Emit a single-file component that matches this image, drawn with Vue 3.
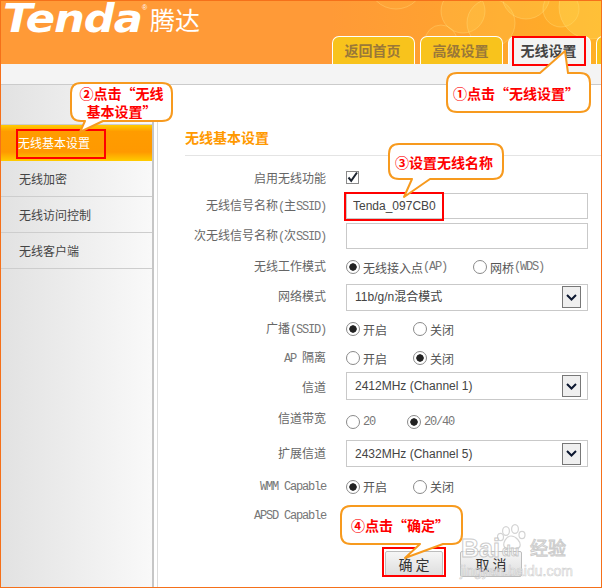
<script setup>
const sideItems = ['无线加密', '无线访问控制', '无线客户端']
const tabs = ['返回首页', '高级设置', '无线设置', '']
const bubbles = [
  { x: 395, y: -20, r: 28, a: 0.1 }, { x: 462, y: 10, r: 22, a: 0.2 }, { x: 490, y: 22, r: 24, a: 0.18 },
  { x: 525, y: -6, r: 24, a: 0.24 }, { x: 560, y: 8, r: 18, a: 0.16 }, { x: 590, y: 6, r: 32, a: 0.34 }, { x: 440, y: 40, r: 16, a: 0.1 }
]
const shapes = [
  'M457 73H540L565 51L568 73H580Q590 73 590 83V102Q590 112 580 112H457Q447 112 447 102V83Q447 73 457 73Z',
  'M81 83H162Q172 83 172 93V111Q172 121 162 121H103L80 132L85 121H81Q71 121 71 111V93Q71 83 81 83Z',
  'M399 144H493Q503 144 503 154V169Q503 179 493 179H430L404 197L412 179H399Q389 179 389 169V154Q389 144 399 144Z',
  'M351 506H452Q462 506 462 516V534Q462 544 452 544H443L405 558L420 544H351Q341 544 341 534V516Q341 506 351 506Z'
]
const marks = [
  [513, 37, 72, 28], [17, 130, 88, 28], [345, 193, 98, 27], [383, 548, 62, 28]
]
</script>

<template>
  <div class="frame">
    <header class="head">
      <svg class="bubbles" width="600" height="63" viewBox="0 0 600 63" aria-hidden="true">
        <circle v-for="(b, i) in bubbles" :key="i" :cx="b.x" :cy="b.y" :r="b.r" :fill="`rgba(255,222,90,${b.a})`" stroke="rgba(255,235,150,.3)" />
      </svg>
      <div class="logo"><span class="tenda">Tenda</span><sup class="reg">®</sup><span class="cn">腾达</span></div>
      <nav class="tabs">
        <div v-for="(t, i) in tabs" :key="i" class="tab" :class="{ on: i === 2 }">{{ t }}</div>
      </nav>
    </header>
    <div class="strip"></div>
    <div class="body">
      <aside class="side">
        <div class="item active">无线基本设置</div>
        <div v-for="s in sideItems" :key="s" class="item">{{ s }}</div>
      </aside>
      <main class="main">
        <h1 class="title">无线基本设置</h1>
        <form class="form" @submit.prevent>
          <label class="lb first">启用无线功能</label>
          <div class="ctl"><span class="check"><svg width="13" height="13" viewBox="0 0 13 13"><path d="M2.5 6.5L5.2 9.8L11 1.5" fill="none" stroke="#1c2430" stroke-width="2" /></svg></span></div>

          <label class="lb">无线信号名称<span class="m">(</span>主<span class="m">SSID)</span></label>
          <input class="field" value="Tenda_097CB0" />

          <label class="lb">次无线信号名称<span class="m">(</span>次<span class="m">SSID)</span></label>
          <input class="field" value="" />

          <label class="lb">无线工作模式</label>
          <div class="ctl">
            <span class="opt w127"><i class="radio sel"></i>无线接入点<span class="m">(AP)</span></span>
            <span class="opt"><i class="radio"></i>网桥<span class="m">(WDS)</span></span>
          </div>

          <label class="lb">网络模式</label>
          <div class="sel-box"><span class="net">11b/g/n混合模式</span><b class="arrow"><svg width="11" height="7" viewBox="0 0 11 7"><path d="M1 1L5.5 5.5L10 1" fill="none" stroke="#0c1730" stroke-width="2" /></svg></b></div>

          <label class="lb">广播<span class="m">(SSID)</span></label>
          <div class="ctl">
            <span class="opt w67"><i class="radio sel"></i>开启</span>
            <span class="opt"><i class="radio"></i>关闭</span>
          </div>

          <label class="lb"><span class="m">AP </span>隔离</label>
          <div class="ctl">
            <span class="opt w67"><i class="radio"></i>开启</span>
            <span class="opt"><i class="radio sel"></i>关闭</span>
          </div>

          <label class="lb first">信道</label>
          <div class="sel-box tall"><span>2412MHz (Channel 1)</span><b class="arrow"><svg width="11" height="7" viewBox="0 0 11 7"><path d="M1 1L5.5 5.5L10 1" fill="none" stroke="#0c1730" stroke-width="2" /></svg></b></div>

          <label class="lb up">信道带宽</label>
          <div class="ctl down">
            <span class="opt w61"><i class="radio"></i><span class="m">20</span></span>
            <span class="opt"><i class="radio sel"></i><span class="m">20/40</span></span>
          </div>

          <label class="lb">扩展信道</label>
          <div class="sel-box"><span>2432MHz (Channel 5)</span><b class="arrow"><svg width="11" height="7" viewBox="0 0 11 7"><path d="M1 1L5.5 5.5L10 1" fill="none" stroke="#0c1730" stroke-width="2" /></svg></b></div>

          <label class="lb"><span class="m">WMM Capable</span></label>
          <div class="ctl">
            <span class="opt w67"><i class="radio sel"></i>开启</span>
            <span class="opt"><i class="radio"></i>关闭</span>
          </div>

          <label class="lb"><span class="m">APSD Capable</span></label>
          <div class="ctl"></div>

          <div class="actions">
            <button class="btn ok">确 定</button>
            <button class="btn">取 消</button>
          </div>
        </form>
      </main>
    </div>

    <div class="mark-wm">
      <svg class="paw" width="30" height="30" viewBox="0 0 30 30" aria-hidden="true">
        <g fill="#fff" stroke="#d4d4d4" stroke-width="1.2">
          <ellipse cx="9" cy="8" rx="3.4" ry="4.4" /><ellipse cx="18" cy="6" rx="3.4" ry="4.4" />
          <ellipse cx="3.5" cy="14" rx="3" ry="3.6" /><ellipse cx="25" cy="12" rx="3" ry="3.6" />
          <path d="M14 13C9 13 6 20 7 23C8 27 12 25 15 25C18 25 22 27 23 23C24 19 19 13 14 13Z" />
        </g>
      </svg>
      <span class="wm-bai">Bai</span><span class="wm-du">du</span><span class="wm-jy">经验</span>
      <span class="wm-url">jingyan.baidu.com</span>
    </div>

    <svg class="overlay" width="602" height="588" viewBox="0 0 602 588" aria-hidden="true">
      <rect v-for="(r, i) in marks" :key="'r' + i" :x="r[0]" :y="r[1]" :width="r[2]" :height="r[3]" fill="none" stroke="#f00" stroke-width="2" />
      <path v-for="(d, i) in shapes" :key="i" :d="d" fill="#fff" stroke="#f79a1e" stroke-width="2" stroke-linejoin="round" />
    </svg>
    <div class="note n1">①点击“无线设置”</div>
    <div class="note n2">②点击“无线<br />基本设置”</div>
    <div class="note n3">③设置无线名称</div>
    <div class="note n4">④点击“确定”</div>
  </div>
</template>

<style>
html, body { margin: 0; background: #fff; }
</style>

<style scoped>
.frame {
  position: relative;
  box-sizing: border-box;
  width: 602px;
  height: 588px;
  border: 1px solid #f5701a;
  display: flex;
  flex-direction: column;
  overflow: hidden;
  font-family: "Noto Sans CJK SC", "Liberation Sans", sans-serif;
  font-size: 12px;
  color: #666;
}
.head {
  position: relative;
  height: 63px;
  flex: none;
  display: flex;
  align-items: flex-end;
  background: linear-gradient(90deg, #ff9a37 0%, #ff9a37 55%, #ffa42e 80%, #ffb025 100%);
  overflow: hidden;
}
.bubbles { position: absolute; left: 0; top: 0; }
.logo {
  position: relative;
  width: 331px;
  height: 63px;
  flex: none;
  color: #fff;
}
.tenda {
  position: absolute;
  left: 2px;
  top: 0;
  font-family: "DejaVu Sans", sans-serif;
  font-weight: bold;
  font-style: italic;
  font-size: 39px;
  line-height: 36px;
  letter-spacing: -1px;
  transform: scaleX(1.11);
  transform-origin: left top;
}
.reg {
  position: absolute;
  left: 141px;
  top: 2px;
  margin: 0;
  font-size: 7px;
  line-height: 10px;
  font-family: "Liberation Sans", sans-serif;
}
.cn {
  position: absolute;
  left: 149px;
  top: 3px;
  font-size: 25px;
  line-height: 30px;
}
.tabs { position: relative; display: flex; gap: 5px; }
.tab {
  box-sizing: border-box;
  width: 83px;
  height: 28px;
  flex: none;
  padding-right: 2px;
  border: 1px solid #fff;
  border-bottom: 0;
  border-radius: 7px 7px 0 0;
  background: #f8c31c;
  color: #9a7838;
  font-size: 14px;
  font-weight: bold;
  line-height: 27px;
  text-align: center;
}
.tab.on { background: #f4f4f4; color: #444; }
.strip {
  height: 20px;
  flex: none;
  background: #f4f4f4;
  border-bottom: 1px solid #cbcbcb;
}
.body { flex: 1; display: flex; min-height: 0; }
.side {
  box-sizing: border-box;
  width: 153px;
  flex: none;
  padding-top: 40px;
  background: linear-gradient(90deg, #e2e2e2, #f9f9f9);
  border-right: 2px solid #c6c6c6;
  margin-right: 3px;
}
.item {
  box-sizing: border-box;
  height: 36px;
  padding-left: 18px;
  border-bottom: 1px solid #cdcdcd;
  color: #444;
  line-height: 35px;
}
.active {
  padding-left: 17px;
  border-bottom: 0;
  color: #fff;
  background: linear-gradient(180deg, #ffcc00 0%, #ff9c00 18%, #ff9900 75%, #ffcc00 100%);
  box-shadow: 0 -1px 0 #cdcdcd;
}
.main {
  flex: 1;
  min-width: 0;
  border-left: 1px solid #dcdcdc;
  padding-left: 27px;
}
.title {
  margin: 43px 0 0;
  height: 27px;
  border-bottom: 1px solid #e4e4e4;
  color: #ff9900;
  font-size: 14px;
  font-weight: bold;
  line-height: 18px;
}
.form {
  display: grid;
  grid-template-columns: 141px 242px;
  grid-template-rows: 28px 30px 30px 32px 28px 36px 22px 34px 36px 29px 37px 20px auto;
  column-gap: 20px;
  align-items: center;
  padding-top: 7px;
}
.lb { text-align: right; color: #666; white-space: nowrap; margin-bottom: 3px; }
.lb.first { margin-bottom: 0; }
.m {
  font-family: "Liberation Mono", monospace;
  font-size: 12px;
  letter-spacing: -1.2px;
  color: #777;
}
.lb.up { margin-bottom: 7px; }
.down { margin-top: 2px; }
.ctl { display: flex; align-items: center; height: 16px; }
.check {
  box-sizing: border-box;
  display: block;
  width: 13px;
  height: 13px;
  border: 1px solid #8a8a8a;
  line-height: 0;
}
.check svg { display: block; margin: -1px; }
.field {
  box-sizing: border-box;
  width: 242px;
  height: 26px;
  border: 1px solid #c9c9c9;
  padding: 0 6px;
  margin: 0;
  outline: 0;
  font-family: "Liberation Sans", sans-serif;
  font-size: 12px;
  color: #444;
}
.opt { display: flex; align-items: center; color: #555; flex: none; }
.w127 { width: 127px; }
.w67 { width: 67px; }
.w61 { width: 61px; }
.radio {
  box-sizing: border-box;
  width: 14px;
  height: 14px;
  margin-right: 3px;
  border: 1px solid #8a8a8a;
  border-radius: 50%;
  background: #fff;
  flex: none;
}
.radio.sel { background: radial-gradient(circle, #222 0, #222 3.4px, #fff 4px); }
.sel-box {
  box-sizing: border-box;
  width: 242px;
  height: 27px;
  display: flex;
  align-items: center;
  justify-content: space-between;
  padding: 0 6px 0 8px;
  border: 1px solid #c9c9c9;
  font-family: "Liberation Sans", "Noto Sans CJK SC", sans-serif;
  font-size: 12px;
  color: #444;
}
.tall { height: 28px; }
.net { margin-bottom: 3px; }
.arrow {
  box-sizing: border-box;
  width: 19px;
  height: 22px;
  display: flex;
  align-items: center;
  justify-content: center;
  border: 1px solid #777;
  background: #efefef;
}
.actions {
  grid-column: 2;
  display: flex;
  align-items: flex-end;
  gap: 17px;
  margin-left: 39px;
  padding-top: 26px;
}
.btn {
  box-sizing: border-box;
  width: 62px;
  height: 26px;
  padding: 0;
  border: 1px solid #bdbdbd;
  border-radius: 2px;
  background: linear-gradient(180deg, #f6f6f6, #dedede);
  color: #333;
  font-family: inherit;
  font-size: 14px;
  line-height: 24px;
}
.ok { width: 58px; height: 25px; margin-bottom: 1px; }
.overlay { position: absolute; left: -1px; top: -1px; pointer-events: none; }
.note {
  position: absolute;
  color: #f00;
  font-size: 14px;
  font-weight: bold;
  line-height: 18px;
  text-align: center;
  white-space: nowrap;
}
.n1 { left: 452px; top: 83px; }
.n2 { left: 70px; top: 83px; width: 101px; }
.n3 { left: 394px; top: 152px; }
.n4 { left: 350px; top: 515px; }
.mark-wm { position: absolute; left: 0; top: 0; pointer-events: none; }
.paw { position: absolute; left: 496px; top: 522px; }
.wm-bai, .wm-du, .wm-jy, .wm-url {
  position: absolute;
  color: rgba(255,255,255,.7);
  -webkit-text-stroke: 1px rgba(190,190,190,.8);
  font-family: "Liberation Sans", sans-serif;
  white-space: nowrap;
}
.wm-bai { left: 460px; top: 533px; font-size: 25px; line-height: 28px; font-weight: bold; }
.wm-du { left: 501px; top: 542px; font-size: 14px; line-height: 16px; font-weight: bold; }
.wm-jy { left: 529px; top: 535px; font-size: 18px; line-height: 22px; font-family: "Noto Sans CJK SC", sans-serif; }
.wm-url { left: 459px; top: 562px; font-size: 14px; line-height: 16px; -webkit-text-stroke: .6px rgba(190,190,190,.75); }
</style>
